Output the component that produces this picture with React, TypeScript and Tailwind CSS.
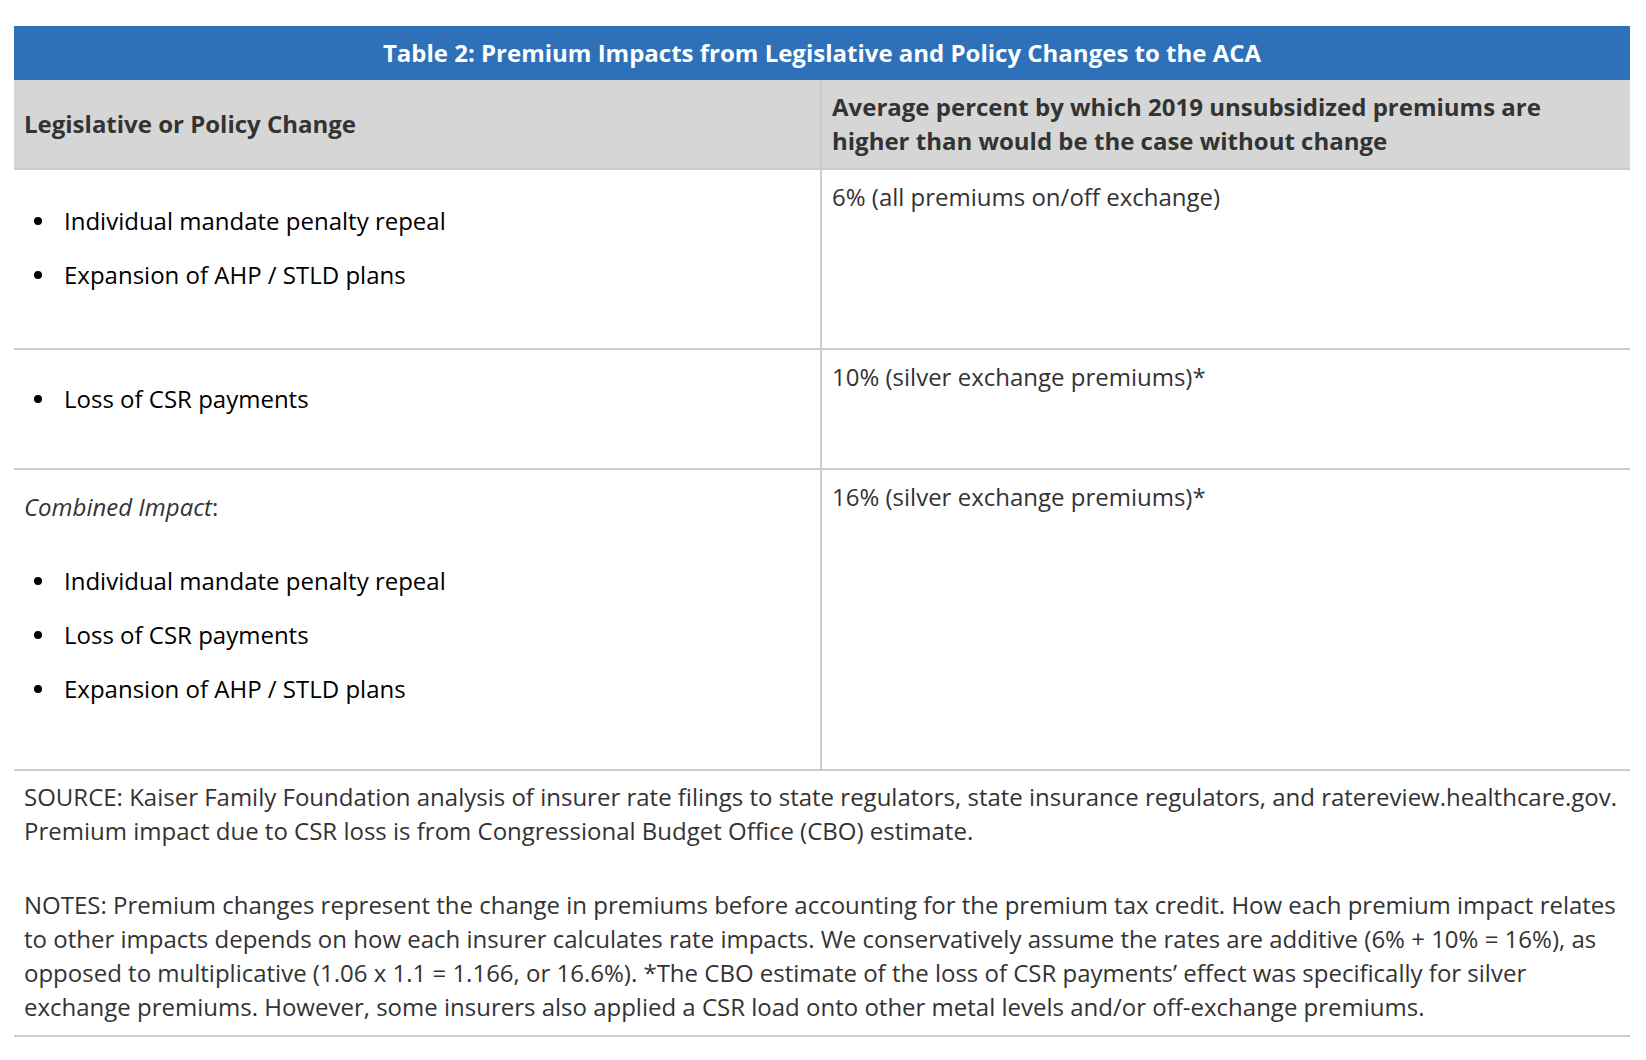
import React from "react";

const Bullet = ({ children }: { children: React.ReactNode }) => (
  <li className="flex items-center h-[34px]">
    <span className="ml-[10px] mr-[22px] w-[8px] h-[8px] rounded-full bg-black shrink-0" />
    <span>{children}</span>
  </li>
);

const App = () => {
  return (
    <div
      className="w-[1646px] h-[1060px] bg-white pt-[26px] pl-[14px] pr-[16px] text-[#222]"
      style={{ fontFamily: '"Open Sans", "Liberation Sans", sans-serif' }}
    >
      <div className="h-[54px] bg-[#2e71b9] flex items-center justify-center text-white font-bold text-[24px]">
        Table 2: Premium Impacts from Legislative and Policy Changes to the ACA
      </div>

      <div className="grid grid-cols-[808px_1fr] text-[24px] leading-[34px]">
        {/* header */}
        <div className="h-[90px] bg-[#d6d6d6] border-b-2 border-r-2 border-[#cbcbcb] flex items-center px-[10px] font-bold text-[#333]">
          Legislative or Policy Change
        </div>
        <div className="h-[90px] bg-[#d6d6d6] border-b-2 border-[#cbcbcb] flex items-center px-[10px] font-bold text-[#333]">
          Average percent by which 2019 unsubsidized premiums are
          <br />
          higher than would be the case without change
        </div>

        {/* row 1 */}
        <div className="border-b-2 border-r-2 border-[#cccccc] px-[10px] pt-[34px] pb-[56px] text-black">
          <ul className="flex flex-col gap-[20px]">
            <Bullet>Individual mandate penalty repeal</Bullet>
            <Bullet>Expansion of AHP / STLD plans</Bullet>
          </ul>
        </div>
        <div className="border-b-2 border-[#cccccc] px-[10px] pt-[10px] text-[#333]">
          6% (all premiums on/off exchange)
        </div>

        {/* row 2 */}
        <div className="border-b-2 border-r-2 border-[#cccccc] px-[10px] pt-[32px] pb-[52px] text-black">
          <ul className="flex flex-col gap-[20px]">
            <Bullet>Loss of CSR payments</Bullet>
          </ul>
        </div>
        <div className="border-b-2 border-[#cccccc] px-[10px] pt-[10px] text-[#333]">
          10% (silver exchange premiums)*
        </div>

        {/* row 3 */}
        <div className="border-b-2 border-r-2 border-[#cccccc] px-[10px] pt-[20px] pb-[63px] text-black">
          <p className="text-[#333]">
            <em>Combined Impact</em>:
          </p>
          <ul className="mt-[40px] flex flex-col gap-[20px]">
            <Bullet>Individual mandate penalty repeal</Bullet>
            <Bullet>Loss of CSR payments</Bullet>
            <Bullet>Expansion of AHP / STLD plans</Bullet>
          </ul>
        </div>
        <div className="border-b-2 border-[#cccccc] px-[10px] pt-[10px] text-[#333]">
          16% (silver exchange premiums)*
        </div>
      </div>

      <div className="border-b-2 border-[#cccccc] px-[10px] pt-[9px] pb-[11px] text-[24px] leading-[34px] text-[#333]">
        <p className="whitespace-nowrap">
          SOURCE: Kaiser Family Foundation analysis of insurer rate filings to state regulators, state insurance regulators, and ratereview.healthcare.gov.
          <br />
          Premium impact due to CSR loss is from Congressional Budget Office (CBO) estimate.
        </p>
        <p className="mt-[40px] whitespace-nowrap">
          NOTES: Premium changes represent the change in premiums before accounting for the premium tax credit. How each premium impact relates
          <br />
          to other impacts depends on how each insurer calculates rate impacts. We conservatively assume the rates are additive (6% + 10% = 16%), as
          <br />
          opposed to multiplicative (1.06 x 1.1 = 1.166, or 16.6%). *The CBO estimate of the loss of CSR payments’ effect was specifically for silver
          <br />
          exchange premiums. However, some insurers also applied a CSR load onto other metal levels and/or off-exchange premiums.
        </p>
      </div>
    </div>
  );
};

export default App;
